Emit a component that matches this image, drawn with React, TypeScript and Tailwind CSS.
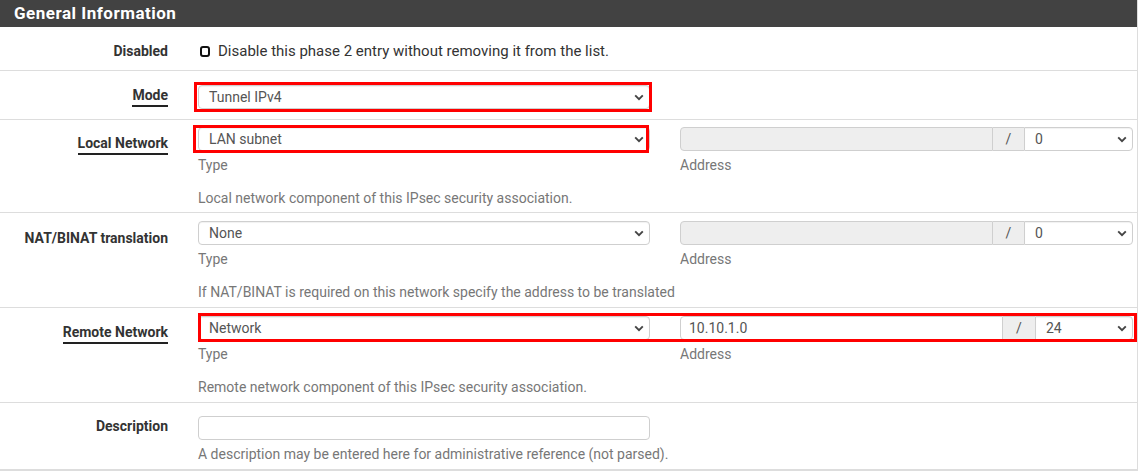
import React from "react";

const Chevron: React.FC = () => (
    <svg width="10" height="7" viewBox="0 0 10 7" className="shrink-0">
        <path d="M1.2 1.4 L5 5.2 L8.8 1.4" fill="none" stroke="#444" strokeWidth="1.9" />
    </svg>
);

const Select: React.FC<{ value: string; className?: string }> = ({ value, className }) => (
    <div
        className={
            "h-[24px] flex items-center justify-between pl-[10px] pr-[5px] border border-[#cfcfcf] bg-white text-[14px] text-[#555] shadow-[inset_0_1px_1px_rgba(0,0,0,0.06)] " +
            (className || "rounded-[4px]")
        }
    >
        <span>{value}</span>
        <Chevron />
    </div>
);

const Label: React.FC<{ text: string; required?: boolean; pt: string }> = ({ text, required, pt }) => (
    <div className={"w-[168px] shrink-0 text-right text-[14px] font-bold text-[#333] " + pt}>
        {required ? (
            <span className="border-b-2 border-[#222] pb-[2px]">{text}</span>
        ) : (
            text
        )}
    </div>
);

const AddressGroup: React.FC<{ value: string; mask: string; disabled?: boolean; inputW: string; maskW: string }> = ({
    value,
    mask,
    disabled,
    inputW,
    maskW,
}) => (
    <div className="flex h-[24px] w-[453px]">
        <div
            className={
                "h-full border border-[#cfcfcf] rounded-l-[4px] pl-[8px] flex items-center text-[14px] text-[#555] " +
                inputW +
                (disabled ? " bg-[#eee]" : " bg-white")
            }
        >
            {value}
        </div>
        <div className={"h-full border-y border-[#cfcfcf] bg-[#eee] flex items-center justify-center text-[14px] text-[#555] " + maskW}>
            /
        </div>
        <Select value={mask} className={"flex-1 rounded-r-[4px] " + (disabled ? "bg-[#eee]" : "")} />
    </div>
);

const NetworkRow: React.FC<{
    label: string;
    required?: boolean;
    type: string;
    address: string;
    mask: string;
    disabled?: boolean;
    inputW: string;
    maskW: string;
    help: string;
    labelPt: string;
}> = ({ label, required, type, address, mask, disabled, inputW, maskW, help, labelPt }) => (
    <div className="flex border-b border-[#ddd] h-[95px]">
        <Label text={label} required={required} pt={labelPt} />
        <div className="ml-[30px] pt-[8px] flex flex-col">
            <div className="flex gap-[30px]">
                <div className="w-[452px]">
                    <Select value={type} />
                    <div className="mt-[4px] text-[14px] text-[#777]">Type</div>
                </div>
                <div>
                    <AddressGroup value={address} mask={mask} disabled={disabled} inputW={inputW} maskW={maskW} />
                    <div className="mt-[4px] text-[14px] text-[#777]">Address</div>
                </div>
            </div>
            <div className="mt-[12px] text-[14px] text-[#777] whitespace-nowrap">{help}</div>
        </div>
    </div>
);

const App: React.FC = () => {
    return (
        <div
            className="relative w-[1139px] h-[472px] bg-white overflow-hidden"
            style={{ fontFamily: "Roboto, 'Liberation Sans', sans-serif" }}
        >
            <div className="w-[1138px] border-r border-[#ddd]">
                {/* Header */}
                <div className="h-[27px] bg-[#424242] flex items-center pl-[14px] text-[17px] font-bold text-white tracking-[0.5px]">
                    General Information
                </div>

                {/* Disabled */}
                <div className="flex items-start border-b border-[#ddd] h-[44px] pt-[13px]">
                    <div className="w-[168px] shrink-0 text-right text-[14px] leading-[22px] font-bold text-[#333]">Disabled</div>
                    <div className="ml-[32px] flex items-center gap-[8px] text-[15px] leading-[22px] text-[#333]">
                        <div className="w-[10px] h-[11px] border-2 border-[#111] rounded-[3px]" />
                        <span>Disable this phase 2 entry without removing it from the list.</span>
                    </div>
                </div>

                {/* Mode */}
                <div className="flex border-b border-[#ddd] h-[49px]">
                    <Label text="Mode" required pt="pt-[14px]" />
                    <div className="ml-[30px] pt-[14px] w-[452px]">
                        <Select value="Tunnel IPv4" />
                    </div>
                </div>

                {/* Local Network */}
                <div className="flex border-b border-[#ddd] h-[93px]">
                    <Label text="Local Network" required pt="pt-[13px]" />
                    <div className="ml-[30px] pt-[7px] flex flex-col">
                        <div className="flex gap-[30px]">
                            <div className="w-[452px]">
                                <Select value="LAN subnet" />
                                <div className="mt-[4px] text-[14px] text-[#777]">Type</div>
                            </div>
                            <div>
                                <AddressGroup value="" mask="0" disabled inputW="w-[313px]" maskW="w-[31px]" />
                                <div className="mt-[4px] text-[14px] text-[#777]">Address</div>
                            </div>
                        </div>
                        <div className="mt-[12px] text-[14px] text-[#777]">
                            Local network component of this IPsec security association.
                        </div>
                    </div>
                </div>

                <NetworkRow
                    label="NAT/BINAT translation"
                    type="None"
                    address=""
                    mask="0"
                    disabled
                    inputW="w-[313px]"
                    maskW="w-[31px]"
                    help="If NAT/BINAT is required on this network specify the address to be translated"
                    labelPt="pt-[15px]"
                />

                <NetworkRow
                    label="Remote Network"
                    required
                    type="Network"
                    address="10.10.1.0"
                    mask="24"
                    inputW="w-[323px]"
                    maskW="w-[32px]"
                    help="Remote network component of this IPsec security association."
                    labelPt="pt-[14px]"
                />

                {/* Description */}
                <div className="flex border-b-2 border-[#ddd] h-[68px]">
                    <Label text="Description" pt="pt-[13px]" />
                    <div className="ml-[30px] pt-[13px] w-[452px]">
                        <div className="h-[24px] border border-[#cfcfcf] rounded-[4px] bg-white" />
                        <div className="mt-[4px] text-[14px] text-[#777] whitespace-nowrap">
                            A description may be entered here for administrative reference (not parsed).
                        </div>
                    </div>
                </div>
            </div>

            {/* Red annotation boxes */}
            <div className="absolute left-[194px] top-[82px] w-[458px] h-[30px] border-[3px] border-[#f00] pointer-events-none" />
            <div className="absolute left-[193px] top-[125px] w-[456px] h-[28px] border-[3px] border-[#f00] pointer-events-none" />
            <div className="absolute left-[198px] top-[313px] w-[939px] h-[29px] border-[3px] border-[#f00] pointer-events-none" />
        </div>
    );
};

export default App;
